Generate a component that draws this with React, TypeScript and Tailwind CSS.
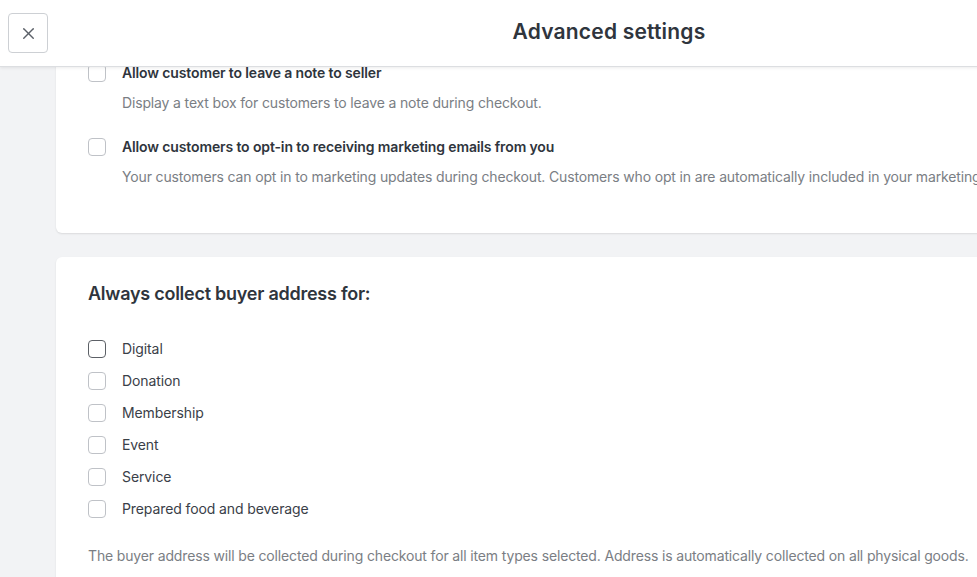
import { X } from "lucide-react";

const font = { fontFamily: "Inter, 'Liberation Sans', sans-serif" };

const Box = ({ focused = false }: { focused?: boolean }) => (
  <span
    className={
      "block w-[18px] h-[18px] shrink-0 rounded-[4px] border bg-white " +
      (focused ? "border-[#5c6066]" : "border-[#bfc2c7]")
    }
  />
);

const OptionRow = ({ label, desc }: { label: string; desc: string }) => (
  <div className="flex gap-4">
    <div className="pt-px">
      <Box />
    </div>
    <div className="flex flex-col">
      <span className="text-[14px] leading-5 font-semibold tracking-[-0.13px] text-[#2f353d] whitespace-nowrap">{label}</span>
      <span className="mt-[10px] text-[14px] leading-5 tracking-[-0.15px] text-[#7a7e84] whitespace-nowrap">{desc}</span>
    </div>
  </div>
);

const types = ["Digital", "Donation", "Membership", "Event", "Service", "Prepared food and beverage"];

export default function App() {
  return (
    <div className="relative w-[977px] h-[577px] overflow-hidden bg-[#f2f3f5]" style={font}>
      {/* header overlays the scrolled content */}
      <div className="absolute top-0 left-0 z-10 w-[1218px] h-[67px] bg-white border-b border-[#dcdee1] shadow-[0_1px_3px_rgba(0,0,0,0.08)] flex items-center">
        <button className="ml-2 w-10 h-10 flex items-center justify-center rounded-[4px] border border-[#cdd0d4] bg-white text-[#5b6068]">
          <X className="w-[19px] h-[19px]" strokeWidth={1.75} />
        </button>
        <h1 className="absolute left-0 right-0 text-center text-[21px] leading-[28px] font-semibold tracking-[0.2px] text-[#2f353d] pointer-events-none -mt-[2px]">
          Advanced settings
        </h1>
      </div>

      <div className="w-[1218px] px-14 mt-[16px] flex flex-col gap-6">
        <div className="bg-white rounded-md shadow-[0_1px_2px_rgba(0,0,0,0.1)] px-8 pt-[47px] pb-[46px] flex flex-col gap-6">
          <OptionRow
            label="Allow customer to leave a note to seller"
            desc="Display a text box for customers to leave a note during checkout."
          />
          <OptionRow
            label="Allow customers to opt-in to receiving marketing emails from you"
            desc="Your customers can opt in to marketing updates during checkout. Customers who opt in are automatically included in your marketing audience."
          />
        </div>

        <div className="bg-white rounded-md shadow-[0_1px_2px_rgba(0,0,0,0.1)] px-8 pt-6 pb-8">
          <h2 className="text-[18px] leading-[26px] font-semibold tracking-[-0.25px] text-[#2f353d]">Always collect buyer address for:</h2>
          <div className="mt-[26px] flex flex-col">
            {types.map((t, i) => (
              <div key={t} className="h-8 flex items-center gap-4">
                <Box focused={i === 0} />
                <span className="text-[14px] leading-5 tracking-[-0.1px] text-[#3a4048]">{t}</span>
              </div>
            ))}
          </div>
          <p className="mt-[21px] text-[14px] leading-5 tracking-[-0.15px] text-[#7a7e84] whitespace-nowrap">
            The buyer address will be collected during checkout for all item types selected. Address is automatically collected on all physical goods.
          </p>
        </div>
      </div>
    </div>
  );
}
